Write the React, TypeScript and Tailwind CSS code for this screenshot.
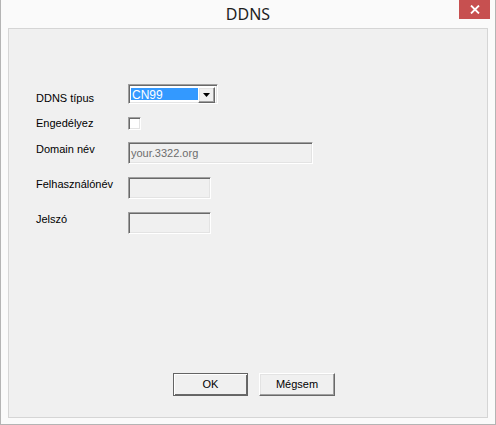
import { useState } from "react";

const sunken =
  "border border-t-[#a0a0a0] border-l-[#a0a0a0] border-r-white border-b-white shadow-[inset_1px_1px_0_#696969,inset_-1px_-1px_0_#e3e3e3]";
const raised =
  "border border-t-white border-l-white border-r-[#696969] border-b-[#696969] shadow-[inset_-1px_-1px_0_#a0a0a0,inset_1px_1px_0_#e3e3e3]";

function Label({ text, pt }: { text: string; pt: string }) {
  return (
    <div className={`w-[92px] shrink-0 leading-[13px] ${pt}`}>{text}</div>
  );
}

export default function App() {
  const [enabled, setEnabled] = useState(false);

  return (
    <div
      className="w-[496px] h-[425px] bg-[#fafafa] border-x border-b border-[#b4b4b4] flex flex-col text-[11px] text-black"
      style={{ fontFamily: '"Liberation Sans", Arial, sans-serif' }}
    >
      {/* Title bar */}
      <div className="h-[28px] shrink-0 flex items-start relative">
        <div
          className="flex-1 text-center pt-[4px] text-[16px] leading-[21px] text-[#1e1e1e]"
          style={{ fontFamily: '"Noto Sans", "Open Sans", sans-serif' }}
        >
          DDNS
        </div>
        <button className="absolute right-[5px] top-0 w-[31px] h-[19px] bg-[#c75050] flex items-center justify-center">
          <svg width="10" height="9" viewBox="0 0 10 9">
            <path d="M1 0.5 L9 8.5 M9 0.5 L1 8.5" stroke="white" strokeWidth="1.8" />
          </svg>
        </button>
      </div>

      {/* Panel */}
      <div className="mx-[7px] h-[390px] border border-[#d5d5d5] bg-[#f0f0f0] flex flex-col pl-[27px]">
        <div className="mt-[55px] h-[20px] flex items-start">
          <Label text="DDNS típus" pt="pt-[8px]" />
          <div className={`w-[90px] h-[20px] bg-white flex p-[3px] pr-[2px] ${sunken}`}>
            <div className="flex-1 bg-[#3399ff] text-white text-[12px] leading-[14px] pl-[1px] -ml-px">CN99</div>
            <div className={`w-[17px] h-[16px] -mt-px bg-[#f0f0f0] flex items-center justify-center ${raised}`}>
              <svg width="7" height="4" viewBox="0 0 7 4">
                <path d="M0 0 H7 L3.5 4 Z" fill="black" />
              </svg>
            </div>
          </div>
        </div>

        <div className="mt-[13px] h-[13px] flex items-start">
          <Label text="Engedélyez" pt="pt-0" />
          <button
            onClick={() => setEnabled(!enabled)}
            className={`w-[13px] h-[13px] bg-white flex items-center justify-center ${sunken}`}
          >
            {enabled && (
              <svg width="7" height="7" viewBox="0 0 7 7">
                <path d="M0.5 3.5 L2.5 5.5 L6.5 1" stroke="black" strokeWidth="1.5" fill="none" />
              </svg>
            )}
          </button>
        </div>

        <div className="mt-[12px] h-[22px] flex items-start">
          <Label text="Domain név" pt="pt-[1px]" />
          <div className={`w-[185px] h-[22px] bg-[#f0f0f0] text-[#6d6d6d] pl-[2px] leading-[20px] ${sunken}`}>
            your.3322.org
          </div>
        </div>

        <div className="mt-[13px] h-[22px] flex items-start">
          <Label text="Felhasználónév" pt="pt-[1px]" />
          <div className={`w-[83px] h-[22px] bg-[#f0f0f0] ${sunken}`} />
        </div>

        <div className="mt-[13px] h-[22px] flex items-start">
          <Label text="Jelszó" pt="pt-[1px]" />
          <div className={`w-[83px] h-[22px] bg-[#f0f0f0] ${sunken}`} />
        </div>

        {/* Buttons */}
        <div className="mt-auto mb-[21px] flex gap-[11px] pl-[137px]">
          <button className="w-[75px] h-[23px] border border-[#646464] bg-[#f0f0f0] shadow-[inset_1px_1px_0_white,inset_-1px_-1px_0_#696969]">
            OK
          </button>
          <button className={`w-[76px] h-[23px] bg-[#f0f0f0] ${raised}`}>Mégsem</button>
        </div>
      </div>
    </div>
  );
}
